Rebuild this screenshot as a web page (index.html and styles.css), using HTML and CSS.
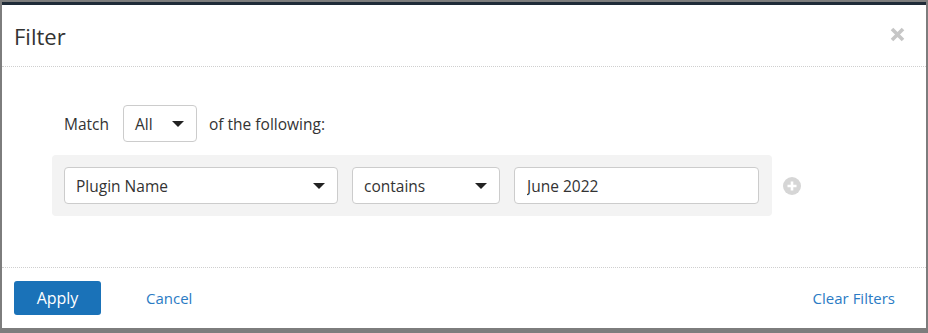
FILE: index.html
```html
<!DOCTYPE html>
<html lang="en">
<head>
    <meta charset="UTF-8">
    <meta name="viewport" content="width=device-width, initial-scale=1.0">
    <title>Filter</title>
    <link rel="stylesheet" href="styles.css">
</head>
<body>

<div class="modal">
    <div class="modal-header">
        <h1 class="modal-title">Filter</h1>
        <span class="close">
            <svg width="15" height="15" viewBox="0 0 15 15">
                <path d="M2 2l11 11M13 2L2 13" stroke="#c6c6c6" stroke-width="3.6"/>
            </svg>
        </span>
    </div>

    <div class="modal-body">
        <div class="match-row">
            <span>Match</span>
            <div class="select select-small">
                <span>All</span>
                <span class="caret"></span>
            </div>
            <span>of the following:</span>
        </div>

        <div class="rule-row">
            <div class="rule-box">
                <div class="select select-field">
                    <span>Plugin Name</span>
                    <span class="caret"></span>
                </div>
                <div class="select select-op">
                    <span>contains</span>
                    <span class="caret"></span>
                </div>
                <input class="text-input" type="text" value="June 2022">
            </div>
            <span class="add-rule">
                <svg width="18" height="18" viewBox="0 0 18 18">
                    <circle cx="9" cy="9" r="9" fill="#d6d6d6"/>
                    <path d="M9 4.5v9M4.5 9h9" stroke="#fff" stroke-width="2.6"/>
                </svg>
            </span>
        </div>
    </div>

    <div class="modal-footer">
        <button class="btn-apply">Apply</button>
        <a class="link cancel" href="#">Cancel</a>
        <a class="link clear" href="#">Clear Filters</a>
    </div>
</div>

</body>
</html>
```

FILE: styles.css
```css
body {
    margin: 0;
    padding-top: 2px;
    height: 331px;
    background-color: #7d7d7d;
    font-family: "Open Sans", "Noto Sans", Arial, sans-serif;
    color: #333;
    overflow: hidden;
}
.modal {
    margin-left: 2px;
    width: 924px;
    height: 326px;
    background-color: white;
    border-top: 3px solid #1f2b38;
    box-sizing: border-box;
    display: flex;
    flex-direction: column;
}
.modal-header {
    height: 62px;
    box-sizing: border-box;
    padding: 0 21px 0 12px;
    display: flex;
    align-items: center;
    justify-content: space-between;
    border-bottom: 1px dotted #cfcfcf;
}
.modal-title {
    margin: 0;
    font-size: 22px;
    font-weight: normal;
    color: #333;
}
.close {
    display: flex;
    margin-top: -2px;
}
.modal-body {
    flex: 1;
    padding: 38px 0 0 50px;
    font-size: 15.5px;
}
.match-row {
    margin-left: 12px;
    display: flex;
    align-items: center;
}
.match-row .select {
    margin: 0 12px 0 14px;
}
.select {
    height: 37px;
    box-sizing: border-box;
    border: 1px solid #ccc;
    border-radius: 4px;
    background-color: white;
    display: flex;
    align-items: center;
    justify-content: space-between;
    padding: 0 12px 0 11px;
}
.select-small {
    width: 74px;
    height: 37px;
}
.select-field {
    width: 274px;
}
.select-op {
    width: 148px;
}
.caret {
    width: 0;
    height: 0;
    border-left: 6px solid transparent;
    border-right: 6px solid transparent;
    border-top: 6px solid #222;
}
.rule-row {
    margin-top: 13px;
    display: flex;
    align-items: center;
    gap: 11px;
}
.rule-box {
    width: 720px;
    box-sizing: border-box;
    padding: 12px 13px 12px 12px;
    background-color: #f3f3f3;
    border-radius: 4px;
    display: flex;
    gap: 14px;
}
.text-input {
    width: 245px;
    height: 37px;
    box-sizing: border-box;
    border: 1px solid #ccc;
    border-radius: 4px;
    padding: 0 12px;
    font-family: inherit;
    font-size: 15.5px;
    color: #333;
}
.add-rule {
    display: flex;
}
.modal-footer {
    height: 61px;
    box-sizing: border-box;
    border-top: 1px dotted #cfcfcf;
    padding: 13px 31px 0 12px;
    display: flex;
    align-items: flex-start;
}
.btn-apply {
    width: 87px;
    height: 34px;
    border: none;
    border-radius: 3px;
    background-color: #1a72b8;
    color: white;
    font-family: inherit;
    font-size: 16px;
    cursor: pointer;
}
.link {
    color: #2b7bc4;
    text-decoration: none;
    font-size: 15px;
    line-height: 34px;
}
.cancel {
    margin-left: 45px;
}
.clear {
    margin-left: auto;
}
```
